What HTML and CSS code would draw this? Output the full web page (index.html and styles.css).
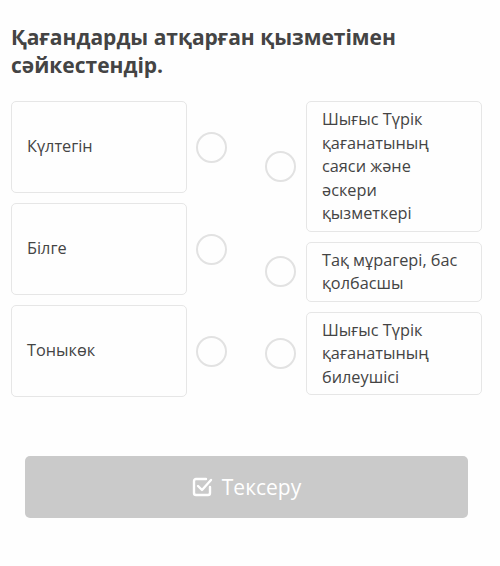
FILE: index.html
```html
<!DOCTYPE html>
<html lang="kk">
<head>
  <meta charset="UTF-8" />
  <title>Сәйкестендіру</title>
  <link rel="stylesheet" href="styles.css">
</head>
<body>
  <h1 class="question">Қағандарды атқарған қызметімен сәйкестендір.</h1>

  <div class="match">
    <div class="column">
      <div class="item">
        <div class="card">Күлтегін</div>
        <span class="dot"></span>
      </div>
      <div class="item">
        <div class="card">Білге</div>
        <span class="dot"></span>
      </div>
      <div class="item">
        <div class="card">Тоныкөк</div>
        <span class="dot"></span>
      </div>
    </div>

    <div class="column right">
      <div class="item">
        <span class="dot"></span>
        <div class="card">Шығыс Түрік қағанатының саяси және әскери қызметкері</div>
      </div>
      <div class="item">
        <span class="dot"></span>
        <div class="card">Тақ мұрагері, бас қолбасшы</div>
      </div>
      <div class="item">
        <span class="dot"></span>
        <div class="card">Шығыс Түрік қағанатының билеушісі</div>
      </div>
    </div>
  </div>

  <button class="check" type="button" disabled>
    <svg width="21" height="20" viewBox="0 0 21 20" fill="none" stroke="#fff" stroke-width="2.4" stroke-linecap="round" stroke-linejoin="round">
      <path d="M14 2H4a2 2 0 0 0-2 2v12a2 2 0 0 0 2 2h12a2 2 0 0 0 2-2v-6" />
      <path d="M6 9l4 4 9-10" />
    </svg>
    Тексеру
  </button>
</body>
</html>
```

FILE: styles.css
```css
body {
  margin: 0;
  padding: 23px 11px 0;
  background: #fefefe;
  font-family: 'Open Sans', sans-serif;
  color: #444;
}
.question {
  margin: 0 0 22px;
  font-size: 21px;
  line-height: 28px;
  font-weight: 700;
  color: #444;
}
.match {
  display: flex;
  justify-content: space-between;
  padding-right: 7px;
}
.column {
  display: flex;
  flex-direction: column;
  gap: 10px;
}
.item {
  display: flex;
  align-items: center;
  gap: 10px;
}
.card {
  box-sizing: border-box;
  width: 176px;
  min-height: 92px;
  display: flex;
  align-items: center;
  padding: 0 15px;
  border: 1.5px solid #e6e6e6;
  border-radius: 5px;
  font-size: 16.3px;
  line-height: 23.5px;
}
.right .card {
  min-height: 0;
  padding: 6px 15px 5px;
}
.dot {
  box-sizing: border-box;
  width: 31px;
  height: 31px;
  border: 2.5px solid #e2e2e2;
  border-radius: 50%;
}
.right .dot {
  margin-left: -28px;
}
.column:first-child .item {
  gap: 9px;
}
.check {
  display: flex;
  align-items: center;
  justify-content: center;
  gap: 9px;
  width: 443px;
  height: 62px;
  margin: 59px 0 0 14px;
  border: none;
  border-radius: 5px;
  background: #cacaca;
  color: #fff;
  font-family: 'Open Sans', sans-serif;
  font-size: 21px;
}
```
